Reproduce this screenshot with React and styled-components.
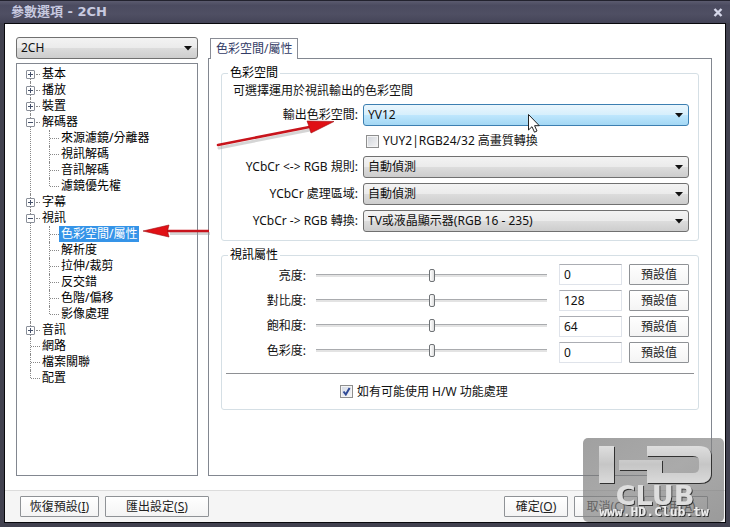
import React, { useState } from "react";
import styled, { createGlobalStyle, css } from "styled-components";

const GlobalStyle = createGlobalStyle`
  * {
    box-sizing: border-box;
  }

  body {
    margin: 0;
    background: #1c1c28;
  }

  body, button, input, select {
    font-family: "Noto Sans", "Noto Sans CJK TC", sans-serif;
    font-size: 12px;
    line-height: 16px;
    color: #111;
  }
`;

const Window = styled.div`
  position: relative;
  display: flex;
  flex-direction: column;
  min-height: 100vh;
  padding: 0 4px 4px;
  background: #41414f;
  border-top: 1px solid #22222e;
`;

const TitleBar = styled.header`
  display: flex;
  align-items: center;
  justify-content: space-between;
  height: 22px;
  margin: 0 -4px;
  padding: 0 7px 0 11px;
  background: linear-gradient(#5b5b6f, #4b4b60 20%, #4f4f63 60%, #444457);
`;

const Title = styled.h1`
  margin: 0;
  font-family: "DejaVu Sans", "Noto Sans CJK TC", sans-serif;
  font-size: 13px;
  line-height: 20px;
  font-weight: bold;
  color: #c8cae0;
`;

const CloseButton = styled.button`
  display: flex;
  padding: 0;
  border: 0;
  background: none;
`;

const Client = styled.div`
  display: flex;
  flex: 1;
  flex-direction: column;
  border: 1px solid #08080c;
  background: #fff;
`;

const Body = styled.main`
  display: flex;
  flex: 1;
  gap: 10px;
  padding: 13px 13px 14px 11px;
`;

const Sidebar = styled.nav`
  display: flex;
  flex-direction: column;
  gap: 4px;
  width: 182px;
`;

const ComboWrap = styled.div`
  position: relative;
  height: 22px;

  svg {
    position: absolute;
    top: 9px;
    right: 5px;
    pointer-events: none;
  }
`;

const ComboSelect = styled.select`
  appearance: none;
  display: block;
  width: 100%;
  height: 22px;
  padding: 0 16px 0 4px;
  border: 1px solid #707070;
  border-radius: 3px;
  background: linear-gradient(#f3f3f3, #ebebeb 48%, #dcdcdc 52%, #cdcdcd);

  ${({ $hot }) =>
    $hot &&
    css`
      border-color: #3c7fb1;
      background: linear-gradient(#eaf6fd, #d6effc 48%, #bde6fd 52%, #a4d8f4);
    `}
`;

const Tree = styled.ul`
  position: relative;
  flex: 1;
  margin: 0;
  padding: 2px 9px;
  border: 1px solid #828790;
  list-style: none;
`;

const TreeItem = styled.li`
  position: relative;

  /* vertical guide, stops at the middle of the last row */
  &::before {
    content: "";
    position: absolute;
    left: 4px;
    top: ${({ $first }) => ($first ? "8px" : "0")};
    bottom: 0;
    border-left: 1px dotted #888;
  }

  &:last-child::before {
    bottom: auto;
    height: 8px;
  }
`;

const TreeRow = styled.div`
  display: flex;
  align-items: center;
  height: 16px;
`;

const Toggle = styled.button`
  position: relative;
  width: 9px;
  height: 9px;
  padding: 0;
  border: 1px solid #8a8f99;
  border-radius: 1px;
  background: #fff;

  &::before,
  &::after {
    content: "";
    position: absolute;
    background: #44506a;
  }

  &::before {
    left: 1px;
    top: 3px;
    width: 5px;
    height: 1px;
  }

  &::after {
    display: ${({ $open }) => ($open ? "none" : "block")};
    left: 3px;
    top: 1px;
    width: 1px;
    height: 5px;
  }
`;

const Dash = styled.span`
  width: ${({ $long }) => ($long ? "9px" : "4px")};
  margin-left: ${({ $long }) => ($long ? "5px" : "1px")};
  border-top: 1px dotted #888;
`;

const TreeLabel = styled.button`
  height: 16px;
  padding: 0 2px;
  border: 0;
  background: ${({ $active }) => ($active ? "#3594e8" : "none")};
  color: ${({ $active }) => ($active ? "#fff" : "#000")};
  line-height: 16px;
  white-space: nowrap;
`;

const SubTree = styled.ul`
  margin: 0;
  padding: 0 0 0 19px;
  list-style: none;
`;

const Content = styled.section`
  display: flex;
  flex: 1;
  flex-direction: column;
  padding-top: 1px;
  min-width: 0;
`;

const Tab = styled.button`
  position: relative;
  align-self: flex-start;
  height: 21px;
  margin: 0 0 -1px 2px;
  padding: 0 5px;
  border: 1px solid #898c95;
  border-bottom: 0;
  background: #fff;
  color: #333c66;
`;

const TabPanel = styled.div`
  display: flex;
  flex: 1;
  flex-direction: column;
  gap: 6px;
  padding: 6px 12px;
  border: 1px solid #828790;
`;

const Group = styled.fieldset`
  min-width: 0;
  margin: 0;
  padding: 0;
  border: 1px solid #d5dfe5;
  border-radius: 3px;
`;

const Legend = styled.legend`
  margin-left: 6px;
  padding: 0 2px;
  color: #000;
`;

const Description = styled.p`
  margin: 0 0 3px;
  padding-left: 11px;
  line-height: 20px;
`;

const Fields = styled.div`
  display: grid;
  grid-template-columns: 136px 1fr;
  column-gap: 5px;
  row-gap: 5px;
  align-items: center;
  padding: 0 9px 8px 0;
`;

const FieldLabel = styled.label`
  text-align: right;
  white-space: nowrap;
`;

const CheckRow = styled.label`
  display: flex;
  grid-column: 2;
  align-items: center;
  gap: 4px;
  height: 20px;
  padding-left: 3px;
`;

const CheckBox = styled.input`
  appearance: none;
  width: 13px;
  height: 13px;
  margin: 0;
  border: 1px solid #8e8f8f;
  background: linear-gradient(135deg, #cfd3da, #f6f6f6);
  box-shadow: inset 0 0 0 1px #f4f4f4;

  &:checked {
    background: url("data:image/svg+xml,%3Csvg xmlns='http://www.w3.org/2000/svg' width='11' height='11'%3E%3Cpath d='M2.5 5.5l2.3 3L8.6 2' fill='none' stroke='%232f4a96' stroke-width='2'/%3E%3C/svg%3E"),
      linear-gradient(135deg, #d3d9e6, #f6f6f6);
  }
`;

const Levels = styled.div`
  display: flex;
  gap: 12px;
  padding: 0 9px 0 0;
`;

const SliderList = styled.div`
  flex: 1;
`;

const SliderRow = styled.div`
  display: flex;
  align-items: center;
  gap: 10px;
  height: 25px;

  label {
    width: 84px;
    text-align: right;
  }
`;

const Slider = styled.input`
  appearance: none;
  flex: 1;
  min-width: 0;
  height: 14px;
  margin: 0;
  background: linear-gradient(#a9abae, #a9abae) 0 5px / 100% 1px no-repeat,
    linear-gradient(#e3e3e3, #e3e3e3) 0 6px / 100% 2px no-repeat,
    linear-gradient(#a9abae, #a9abae) 0 5px / 1px 3px no-repeat;

  &::-webkit-slider-thumb {
    appearance: none;
    width: 6px;
    height: 13px;
    border: 1px solid #6f7376;
    border-radius: 2px;
    background: linear-gradient(90deg, #fff, #dedede);
  }
`;

const ValueList = styled.div`
  display: flex;
  flex-direction: column;
  gap: 5px;
  padding-top: 1px;
`;

const ValueRow = styled.div`
  display: flex;
  gap: 7px;
`;

const ValueInput = styled.input`
  width: 63px;
  height: 21px;
  padding: 0 4px;
  border: 1px solid #dfe3ea;
  border-top-color: #abadb3;
`;

const Button = styled.button`
  height: 21px;
  min-width: ${({ $width }) => $width};
  padding: 0;
  border: 1px solid #8f9296;
  border-radius: 1px;
  background: linear-gradient(#fff, #f4f4f4);
  color: #222;
  white-space: nowrap;
`;

const Divider = styled.hr`
  height: 1px;
  margin: 10px 4px 0;
  border: 0;
  background: #8e9094;
`;

const HardwareRow = styled(CheckRow)`
  height: 35px;
  padding-left: 118px;
`;

const Footer = styled.footer`
  display: flex;
  gap: 6px;
  height: 32px;
  padding: 5px 17px 0 15px;
  border-top: 1px solid #dcdcdc;
  background: #f5f5f5;
`;

const Spacer = styled.div`
  flex: 1;
`;

const Marker = styled.svg`
  position: absolute;
  left: ${({ $x }) => $x}px;
  top: ${({ $y }) => $y}px;
  pointer-events: none;
`;

const Watermark = styled.svg`
  position: absolute;
  right: 6px;
  bottom: 5px;
  pointer-events: none;
`;

const treeData = [
  { name: "基本", children: [] },
  { name: "播放", children: [] },
  { name: "裝置", children: [] },
  { name: "解碼器", children: ["來源濾鏡/分離器", "視訊解碼", "音訊解碼", "濾鏡優先權"] },
  { name: "字幕", children: [] },
  {
    name: "視訊",
    children: ["色彩空間/屬性", "解析度", "拉伸/裁剪", "反交錯", "色階/偏移", "影像處理"],
  },
  { name: "音訊", children: [] },
  { name: "網路" },
  { name: "檔案關聯" },
  { name: "配置" },
];

const levels = [
  { id: "brightness", label: "亮度:", value: "0" },
  { id: "contrast", label: "對比度:", value: "128" },
  { id: "saturation", label: "飽和度:", value: "64" },
  { id: "hue", label: "色彩度:", value: "0" },
];

const Combo = ({ id, value, hot, label }) => (
  <ComboWrap>
    <ComboSelect id={id} $hot={hot} aria-label={label} defaultValue={value}>
      <option>{value}</option>
    </ComboSelect>
    <svg width="9" height="5" viewBox="0 0 9 5">
      <path d="M0 0h8L4 4.500z" fill="#111" />
    </svg>
  </ComboWrap>
);

const TreeNode = ({ node, first, active, onSelect }) => {
  const [open, setOpen] = useState(Boolean(node.children?.length));

  return (
    <TreeItem $first={first}>
      <TreeRow>
        {node.children ? (
          <>
            <Toggle $open={open} aria-label={node.name} onClick={() => setOpen(!open)} />
            <Dash />
          </>
        ) : (
          <Dash $long />
        )}
        <TreeLabel $active={active === node.name} onClick={() => onSelect(node.name)}>
          {node.name}
        </TreeLabel>
      </TreeRow>
      {open && (
        <SubTree>
          {node.children.map((child) => (
            <TreeItem key={child}>
              <TreeRow>
                <Dash $long />
                <TreeLabel $active={active === child} onClick={() => onSelect(child)}>
                  {child}
                </TreeLabel>
              </TreeRow>
            </TreeItem>
          ))}
        </SubTree>
      )}
    </TreeItem>
  );
};

const Arrows = () => (
  <>
    <Marker $x={212} $y={113} width="130" height="40" viewBox="0 0 130 40">
      <path d="M7 34L98 16" stroke="#999" strokeWidth="3" strokeLinecap="round" opacity=".4" />
      <path d="M6 31L100 12.500" stroke="#c8141c" strokeWidth="2.600" strokeLinecap="round" />
      <path d="M95 7L122 7.500L99 19L97 12.500z" fill="#e01015" stroke="#a00c10" strokeWidth=".6" />
    </Marker>
    <Marker $x={140} $y={219} width="74" height="24" viewBox="0 0 74 24">
      <path d="M30 13.500H70" stroke="#999" strokeWidth="3" opacity=".4" />
      <path d="M26 11H69" stroke="#c8141c" strokeWidth="2.600" />
      <path d="M3 11L29 5L27.500 11L29 17z" fill="#e01015" stroke="#a00c10" strokeWidth=".6" />
    </Marker>
  </>
);

const Cursor = () => (
  <Marker $x={527} $y={112} width="14" height="21" viewBox="0 0 14 21">
    <path
      d="M1.500 1.500V17L5 13.700L7.500 19.200L10 18L7.600 12.700H12.300z"
      fill="#fff"
      stroke="#222"
    />
  </Marker>
);

const ClubLogo = () => (
  <Watermark width="141" height="84" viewBox="0 0 141 84">
    <defs>
      <linearGradient id="plate" x1="0" y1="0" x2="1" y2="1">
        <stop offset="0" stopColor="#747474" />
        <stop offset=".5" stopColor="#828282" />
        <stop offset="1" stopColor="#707070" />
      </linearGradient>
      <linearGradient id="metal" gradientUnits="userSpaceOnUse" x1="0" y1="8" x2="0" y2="45">
        <stop offset="0" stopColor="#dedede" />
        <stop offset=".5" stopColor="#c6c6c6" />
        <stop offset="1" stopColor="#dadada" />
      </linearGradient>
      <filter id="drop" x="-10%" y="-10%" width="120%" height="130%">
        <feDropShadow dx="1" dy="1" stdDeviation=".6" floodColor="#333" />
      </filter>
    </defs>
    <rect width="141" height="84" rx="5" fill="url(#plate)" opacity=".68" />
    <g filter="url(#drop)">
      <rect x="16" y="8" width="15" height="37" fill="url(#metal)" />
      <path
        d="M64 8H116Q128 8 128 18V35Q128 45 116 45H64V32H36V22H79V35H110Q116 35 116 30V23Q116 18 110 18H64z"
        fill="url(#metal)"
      />
      <text
        x="72"
        y="67"
        textAnchor="middle"
        fontFamily="DejaVu Sans"
        fontSize="27"
        fontWeight="bold"
        fill="#dedede"
      >
        CLUB
      </text>
      <text
        x="71"
        y="78"
        textAnchor="middle"
        fontFamily="DejaVu Sans Mono"
        fontSize="13"
        fontWeight="bold"
        fill="#ececec"
      >
        www.HD.Club.tw
      </text>
    </g>
  </Watermark>
);

const App = () => {
  const [active, setActive] = useState("色彩空間/屬性");

  return (
    <>
      <GlobalStyle />
      <Window>
        <TitleBar>
          <Title>參數選項 - 2CH</Title>
          <CloseButton aria-label="關閉">
            <svg width="10" height="9" viewBox="0 0 10 9">
              <path d="M1.500 1L8.500 8M8.500 1L1.500 8" stroke="#d6d8ea" strokeWidth="2.400" />
            </svg>
          </CloseButton>
        </TitleBar>
        <Client>
          <Body>
            <Sidebar>
              <Combo id="profile" value="2CH" label="設定檔" />
              <Tree>
                {treeData.map((node, i) => (
                  <TreeNode
                    key={node.name}
                    node={node}
                    first={i === 0}
                    active={active}
                    onSelect={setActive}
                  />
                ))}
              </Tree>
            </Sidebar>
            <Content>
              <Tab>色彩空間/屬性</Tab>
              <TabPanel>
                <Group>
                  <Legend>色彩空間</Legend>
                  <Description>可選擇運用於視訊輸出的色彩空間</Description>
                  <Fields>
                    <FieldLabel htmlFor="output">輸出色彩空間:</FieldLabel>
                    <Combo id="output" value="YV12" hot />
                    <CheckRow>
                      <CheckBox type="checkbox" />
                      YUY2|RGB24/32 高畫質轉換
                    </CheckRow>
                    <FieldLabel htmlFor="rule">YCbCr &lt;-&gt; RGB 規則:</FieldLabel>
                    <Combo id="rule" value="自動偵測" />
                    <FieldLabel htmlFor="area">YCbCr 處理區域:</FieldLabel>
                    <Combo id="area" value="自動偵測" />
                    <FieldLabel htmlFor="convert">YCbCr -&gt; RGB 轉換:</FieldLabel>
                    <Combo id="convert" value="TV或液晶顯示器(RGB 16 - 235)" />
                  </Fields>
                </Group>
                <Group>
                  <Legend>視訊屬性</Legend>
                  <Levels>
                    <SliderList>
                      {levels.map(({ id, label }) => (
                        <SliderRow key={id}>
                          <label htmlFor={id}>{label}</label>
                          <Slider id={id} type="range" defaultValue="50" />
                        </SliderRow>
                      ))}
                    </SliderList>
                    <ValueList>
                      {levels.map(({ id, label, value }) => (
                        <ValueRow key={id}>
                          <ValueInput aria-label={label} defaultValue={value} />
                          <Button $width="60px">預設值</Button>
                        </ValueRow>
                      ))}
                    </ValueList>
                  </Levels>
                  <Divider />
                  <HardwareRow>
                    <CheckBox type="checkbox" defaultChecked />
                    如有可能使用 H/W 功能處理
                  </HardwareRow>
                </Group>
              </TabPanel>
            </Content>
          </Body>
          <Footer>
            <Button $width="79px">
              恢復預設(<u>I</u>)
            </Button>
            <Button $width="104px">
              匯出設定(<u>S</u>)
            </Button>
            <Spacer />
            <Button $width="64px">
              確定(<u>O</u>)
            </Button>
            <Button $width="64px">
              取消(<u>C</u>)
            </Button>
            <Button $width="64px">
              套用(<u>A</u>)
            </Button>
          </Footer>
        </Client>
        <Arrows />
        <Cursor />
        <ClubLogo />
      </Window>
    </>
  );
};

export default App;
